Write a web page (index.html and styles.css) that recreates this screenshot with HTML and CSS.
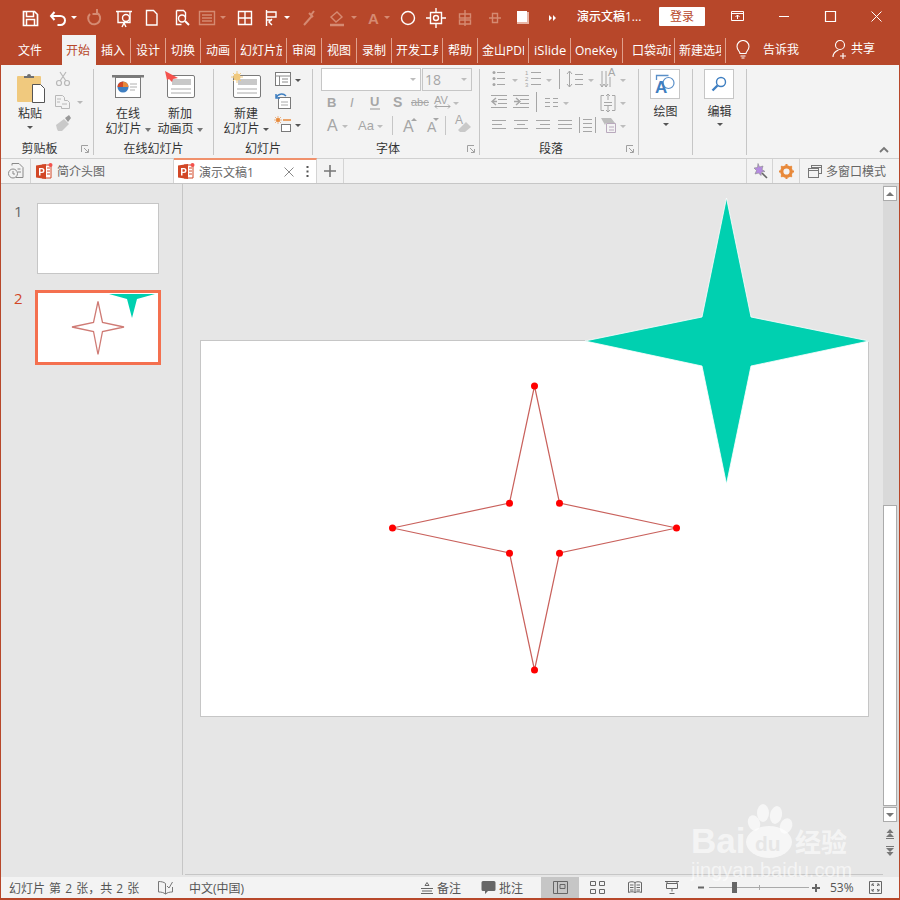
FILE: index.html
```html
<!DOCTYPE html>
<html lang="zh-CN">
<head>
    <meta charset="UTF-8">
    <meta name="viewport" content="width=device-width, initial-scale=1.0">
    <title>演示文稿1 - PowerPoint</title>
    <link rel="stylesheet" href="styles.css">
</head>
<body>
<div class="app">

    <!-- title bar -->
    <div class="titlebar">
        <svg class="qat" width="552" height="33" viewBox="18 0 552 33">
            <g fill="none" stroke="#fff" stroke-width="1.4">
                <path d="M23.500 11.500h11l3 3v11h-14z" stroke-width="1.700"/>
                <path d="M26.500 12v4.500h7V12M26.500 25v-5.500h8V25" stroke-width="1.500"/>
                <path d="M54.500 12l-3.500 4 3.500 4M51.500 16h9a4.500 4.500 0 0 1 0 9h-3" stroke-width="2"/>
                <path d="M116 11.500h16M118 11.500v11h12v-11M124 23l-2 4M124 23l2 4"/>
                <circle cx="126" cy="18" r="3.500"/>
                <path d="M146.500 10.500h7l3.500 3.500v11h-10.500z"/>
                <path d="M176.500 10.500h7l2 2v5M176.500 10.500v14h5"/>
                <circle cx="182" cy="18.500" r="3.500"/>
                <path d="M185 21l4 4" stroke-width="2"/>
                <path d="M238.500 11.500h13v13h-13zM245 11.500v13M238.500 18h13"/>
                <path d="M266.500 10v16M267 12h9v5h-9M267 20h5M272 19l-3 3 3 3"/>
                <circle cx="408" cy="18" r="6.500"/>
                <path d="M430.500 12.500h11v11h-11zM436 8v4M436 24v4M426 18h4M442 18h4"/>
                <circle cx="436" cy="18" r="2.500"/>
            </g>
            <g fill="none" stroke="#d58a72" stroke-width="1.4">
                <path d="M90 14a6 6 0 1 0 7-1M97 9v5h-4.500" stroke-width="2"/>
                <path d="M199.500 11.500h15v13h-15zM202 15h10M202 18h10M202 21h10"/>
                <path d="M304 25l8-9M309 13l4 4M311 15l3-4" stroke-width="2"/>
                <path d="M331 17l6-5 5 5-6 5z"/>
                <path d="M330 25h14" stroke-width="2.500"/>
                <path d="M465 10v16M459.500 14h11v4h-11zM459.500 20h11v4h-11z"/>
                <path d="M489 18h12M492.500 13.500h5v9h-5z"/>
            </g>
            <text x="368" y="24" class="qat-a">A</text>
            <path d="M71 16h6l-3 3zM284 16h6l-3 3z" fill="#fff"/>
            <path d="M220 16h6l-3 3zM351 16h6l-3 3zM384 16h6l-3 3z" fill="#d58a72"/>
            <rect x="517" y="12" width="12" height="12" fill="#e8b5a5"/>
            <rect x="517" y="11" width="10" height="11" fill="#fff"/>
            <path d="M549 15l3 3-3 3zM553 15l3 3-3 3z" fill="#fff"/>
        </svg>
        <span class="doc-title">演示文稿1...</span>
        <button class="login">登录</button>
        <svg width="195" height="33" viewBox="705 0 195 33" class="win-btns">
            <g fill="none" stroke="#fff" stroke-width="1">
                <path d="M731.500 11.500h12v9h-12zM731.500 13.500h12M737.500 19v-4M735.500 17l2-2 2 2"/>
                <path d="M779 16.500h10"/>
                <path d="M825.500 11.500h10v10h-10z" stroke-width="1.200"/>
                <path d="M871.500 11.500l10 10M881.500 11.500l-10 10"/>
            </g>
        </svg>
    </div>

    <!-- ribbon tabs -->
    <div class="tabs">
        <a class="tab tab-file">文件</a>
        <a class="tab tab-active">开始</a>
        <a class="tab">插入</a>
        <a class="tab">设计</a>
        <a class="tab">切换</a>
        <a class="tab">动画</a>
        <a class="tab tab-w51"><span>幻灯片放映</span></a>
        <a class="tab">审阅</a>
        <a class="tab">视图</a>
        <a class="tab">录制</a>
        <a class="tab tab-w51"><span>开发工具</span></a>
        <a class="tab">帮助</a>
        <a class="tab tab-w51"><span>金山PDF</span></a>
        <a class="tab tab-w42">iSlide</a>
        <a class="tab tab-w52"><span>OneKey</span></a>
        <a class="tab tab-w52 tab-pocket"><span>口袋动画</span></a>
        <a class="tab tab-w51"><span>新建选项卡</span></a>
        <svg class="bulb" width="16" height="20" viewBox="0 0 16 20" fill="none" stroke="#fff" stroke-width="1.100">
            <path d="M5 13.500c0-2-3-3.500-3-7a6 6 0 0 1 12 0c0 3.500-3 5-3 7zM5.500 16h5M6.500 18h3"/>
        </svg>
        <span class="tell">告诉我</span>
        <svg class="user" width="18" height="20" viewBox="0 0 18 20" fill="none" stroke="#fff" stroke-width="1.100">
            <circle cx="8" cy="6" r="4.500"/>
            <path d="M1 18c0-4 3-6 5.500-7M11 14v6M8 17h6" />
        </svg>
        <span class="share">共享</span>
    </div>

    <!-- ribbon -->
    <div class="ribbon">
        <div class="group g-clip">
            <div class="group-body">
                <div class="paste">
                    <svg width="30" height="32" viewBox="17 72 30 32">
                        <rect x="18" y="76" width="24" height="26" rx="1" fill="#f0c97e"/>
                        <path d="M25 78v-2h3a2 2 0 0 1 4 0h3v2z" fill="#707070"/>
                        <path d="M33.500 84.500h8l4 4v14h-12z" fill="#fff" stroke="#555"/>
                    </svg>
                    <span class="btn-label paste-label">粘贴</span>
                    <span class="caret"></span>
                </div>
                <svg class="clip-tools" width="30" height="66" viewBox="52 70 30 66" fill="none" stroke="#b8b8b8">
                    <circle cx="58" cy="83" r="2.500" stroke-width="1.200"/>
                    <circle cx="66" cy="83" r="2.500" stroke-width="1.200"/>
                    <path d="M59 81l6-9M65 81l-6-9" stroke-width="1.200"/>
                    <path d="M54.500 95.500h7l2 2v3h3l2 2v6h-8v-2h-6z"/>
                    <path d="M56 99h4M56 102h3M61 104h5" />
                    <path d="M76 101h6l-3 3z" fill="#b8b8b8" stroke="none"/>
                    <path d="M55 125l8-6 5 5-7 7h-4l-1-2z" fill="#c9c9c9" stroke="none"/>
                    <path d="M64 118l4-3 2 3-3 4z" fill="#999" stroke="none"/>
                </svg>
            </div>
            <div class="group-label label-clip">剪贴板</div>
            <svg class="launcher" width="8" height="8" viewBox="0 0 8 8" fill="none" stroke="#a0a0a0"><path d="M.5 7V.5H7M3 3l4 4M4 7.500h3.500V4"/></svg>
        </div>

        <div class="group g-online">
            <div class="group-body big-row">
                <div class="big-btn bb-online">
                    <svg width="34" height="28" viewBox="111 72 34 28">
                        <rect x="112" y="75" width="32" height="2.500" fill="#7a7a7a"/>
                        <rect x="115.500" y="77.500" width="25" height="20" fill="#fff" stroke="#7a7a7a"/>
                        <circle cx="123" cy="87" r="5.500" fill="#3f7fc1"/>
                        <path d="M123 87v-5.500a5.500 5.500 0 0 1 5.500 5.500z" fill="#e8893a"/>
                        <path d="M123 87h-5.500a5.500 5.500 0 0 1 5.500-5.500z" fill="#d24726"/>
                        <path d="M130 84h7M130 87h7M130 90h5" stroke="#b0b0b0"/>
                    </svg>
                    <span class="btn-label">在线</span>
                    <span class="btn-label">幻灯片 <i class="caret caret-o"></i></span>
                </div>
                <div class="big-btn bb-anim">
                    <svg width="32" height="28" viewBox="164 71 32 28">
                        <rect x="167.500" y="75.500" width="27" height="22" rx="1.500" fill="#fff" stroke="#7a7a7a"/>
                        <rect x="172" y="79" width="19" height="6" fill="#c8c8c8"/>
                        <path d="M171 89h20M171 93h20" stroke="#aaa"/>
                        <path d="M165 71l13 7-5 1-1 3-3-3-2 1z" fill="#f4524d"/>
                    </svg>
                    <span class="btn-label">新加</span>
                    <span class="btn-label">动画页 <i class="caret caret-o"></i></span>
                </div>
            </div>
            <div class="group-label">在线幻灯片</div>
        </div>

        <div class="group g-slides">
            <div class="group-body big-row">
                <div class="big-btn bb-new">
                    <svg width="32" height="28" viewBox="230 71 32 28">
                        <rect x="233.500" y="75.500" width="27" height="22" rx="1.500" fill="#fff" stroke="#7a7a7a"/>
                        <rect x="238" y="79" width="19" height="6" fill="#c8c8c8"/>
                        <path d="M237 89h20M237 93h20" stroke="#aaa"/>
                        <circle cx="237" cy="77" r="3.500" fill="#f0c97e"/>
                        <path d="M237 71v12M231 77h12M233 73l8 8M241 73l-8 8" stroke="#f0c97e"/>
                    </svg>
                    <span class="btn-label">新建</span>
                    <span class="btn-label">幻灯片 <i class="caret"></i></span>
                </div>
                <svg class="slide-tools" width="30" height="66" viewBox="274 70 30 66" fill="none">
                    <rect x="275.500" y="72.500" width="15" height="13" fill="#fff" stroke="#7a7a7a"/>
                    <path d="M275 76h16M279.500 76v9M282 79h6M282 82h6" stroke="#8a8a8a"/>
                    <path d="M295 79h6l-3 3z" fill="#555"/>
                    <rect x="278.500" y="97.500" width="12" height="11" fill="#fff" stroke="#7a7a7a"/>
                    <path d="M281 102h7M281 105h7" stroke="#aaa"/>
                    <path d="M276 98a6 6 0 0 1 10-2M276 94v4h4" stroke="#3f7fc1" stroke-width="1.500"/>
                    <circle cx="278" cy="120" r="2" fill="#e8893a"/>
                    <path d="M278 116v8M274 120h8M275 117l6 6M281 117l-6 6" stroke="#e8893a" stroke-width=".6"/>
                    <path d="M283 120h8" stroke="#e8893a" stroke-width="1.500"/>
                    <rect x="281.500" y="124.500" width="9" height="7" fill="#fff" stroke="#7a7a7a"/>
                    <path d="M295 124h6l-3 3z" fill="#555"/>
                </svg>
            </div>
            <div class="group-label">幻灯片</div>
        </div>

        <div class="group g-font">
            <div class="group-body font-body">
                <div class="combo-row">
                    <div class="combo combo-name"><span></span><i class="caret caret-g"></i></div>
                    <div class="combo combo-size"><span>18</span><i class="caret caret-g"></i></div>
                </div>
                <svg width="167" height="46" viewBox="313 93 167 46" class="font-tools">
                    <text x="327" y="107" class="t-b">B</text>
                    <text x="350" y="107" class="t-i">I</text>
                    <text x="370" y="106" class="t-u">U</text>
                    <path d="M370 109h10" stroke="#a6a6a6" stroke-width="1.200"/>
                    <text x="393" y="107" class="t-s">S</text>
                    <text x="411" y="106" class="t-abc">abc</text>
                    <path d="M411 102.500h18" stroke="#a6a6a6"/>
                    <text x="434" y="104" class="t-av">AV</text>
                    <path d="M435 106.500h15M437 104.500l-2 2 2 2M448 104.500l2 2-2 2" fill="none" stroke="#a6a6a6"/>
                    <path d="M453 102h6l-3 3z" fill="#bdbdbd"/>
                    <text x="327" y="131" class="t-big">A</text>
                    <path d="M342 125h6l-3 3zM377 125h6l-3 3z" fill="#bdbdbd"/>
                    <text x="358" y="130" class="t-aa">Aa</text>
                    <path d="M392.500 116v19M445.500 116v19" stroke="#c6c6c6"/>
                    <text x="403" y="132" class="t-big">A</text>
                    <path d="M411 121l3-3 3 3z" fill="#a6a6a6"/>
                    <text x="427" y="132" class="t-mid">A</text>
                    <path d="M433 118h6l-3 3z" fill="#a6a6a6"/>
                    <text x="455" y="124" class="t-small">A</text>
                    <path d="M458 130l8-8 5 5-6 5h-5z" fill="#c9c9c9"/>
                </svg>
            </div>
            <div class="group-label label-left">字体</div>
            <svg class="launcher" width="8" height="8" viewBox="0 0 8 8" fill="none" stroke="#a0a0a0"><path d="M.5 7V.5H7M3 3l4 4M4 7.500h3.500V4"/></svg>
        </div>

        <div class="group g-para">
            <div class="group-body">
                <svg width="159" height="70" viewBox="480 68 159 70" class="para-tools" fill="none" stroke="#a6a6a6">
                    <path d="M497 72.500h8M497 78.500h8M497 84.500h8M531 72.500h10M531 78.500h10M531 84.500h10"/>
                    <circle cx="494" cy="72.500" r="1.500" fill="#a6a6a6" stroke="none"/>
                    <circle cx="494" cy="78.500" r="1.500" fill="#a6a6a6" stroke="none"/>
                    <circle cx="494" cy="84.500" r="1.500" fill="#a6a6a6" stroke="none"/>
                    <text x="525" y="75" class="t-num">1</text>
                    <text x="525" y="81" class="t-num">2</text>
                    <text x="525" y="87" class="t-num">3</text>
                    <path d="M559.500 69v20M569.500 71v16M567 74l2.500-3 2.500 3M567 84l2.500 3 2.500-3M575 74.500h8M575 79.500h8M575 84.500h8"/>
                    <path d="M602 71v16M606 71v16M610 77v10M600 84l2 3 2-3M604 84l2 3 2-3" />
                    <text x="608" y="76" class="t-av">A</text>
                    <path d="M512 79h6l-3 3zM546 79h6l-3 3zM588 79h6l-3 3zM620 79h6l-3 3zM563 102h6l-3 3zM620 102h6l-3 3zM620 125h6l-3 3z" fill="#bdbdbd" stroke="none"/>
                    <path d="M491 95.500h16M498 99.500h9M498 103.500h9M491 107.500h16M513 95.500h16M520 99.500h9M520 103.500h9M513 107.500h16"/>
                    <path d="M496 98l-4 3.500 4 3.500M492 101.500h5M514 101.500h5M516 98l4 3.500-4 3.500" stroke-width="1.400"/>
                    <path d="M536.500 92v20"/>
                    <path d="M545 98.500h5M553 98.500h5M545 102.500h5M553 102.500h5M545 106.500h5M553 106.500h5"/>
                    <path d="M604 95.500h-3v15h3M612 95.500h3v15h-3M608 94v6M606 96l2-2 2 2M608 106v6M606 110l2 2 2-2M604 102.500h8M604 105.500h8" />
                    <path d="M492 120.500h14M492 124.500h10M492 128.500h14M514 120.500h14M517 124.500h8M514 128.500h14M536 120.500h14M540 124.500h10M536 128.500h14M558 120.500h14M558 124.500h14M558 128.500h14"/>
                    <path d="M579.500 117v16M595.500 117v16M583 119.500h9M583 123.500h9M583 127.500h9M583 131.500h9"/>
                    <path d="M601 118h10l4 5h-9l-1 2z" fill="#bdbdbd" stroke="none"/>
                    <path d="M606.500 123.500h9v9h-9zM609 127h5M609 130h5" stroke="#b9a9bd"/>
                </svg>
            </div>
            <div class="group-label label-left">段落</div>
            <svg class="launcher" width="8" height="8" viewBox="0 0 8 8" fill="none" stroke="#a0a0a0"><path d="M.5 7V.5H7M3 3l4 4M4 7.500h3.500V4"/></svg>
        </div>

        <div class="group g-tool">
            <div class="group-body tool-body">
                <div class="tool-box">
                    <svg width="20" height="20" viewBox="0 0 20 20" fill="none">
                        <path d="M1.500 6V1.500h12" stroke="#5a8fc8" stroke-width="1.300"/>
                        <circle cx="13.500" cy="9" r="5.500" stroke="#5a8fc8" stroke-width="1.200"/>
                        <text x="0" y="19" class="t-draw">A</text>
                    </svg>
                </div>
                <span class="btn-label">绘图</span>
                <span class="caret"></span>
            </div>
        </div>

        <div class="group g-tool">
            <div class="group-body tool-body">
                <div class="tool-box">
                    <svg width="16" height="16" viewBox="0 0 16 16" fill="none" stroke="#3f7fc1">
                        <circle cx="10" cy="6" r="4.500" stroke-width="1.400"/>
                        <path d="M6.500 9.500L1.500 14.500" stroke-width="2.400"/>
                    </svg>
                </div>
                <span class="btn-label">编辑</span>
                <span class="caret"></span>
            </div>
        </div>

        <svg class="collapse" width="10" height="7" viewBox="0 0 10 7" fill="none" stroke="#777" stroke-width="1.800"><path d="M1 6l4-4 4 4"/></svg>
    </div>

    <!-- document tabs -->
    <div class="docbar">
        <div class="doc-cell doc-history">
            <svg width="16" height="16" viewBox="0 0 16 16" fill="none" stroke="#8a8a8a">
                <path d="M4 2.500V.5h7l4 4v10H8"/>
                <circle cx="5" cy="10.500" r="4.500"/>
                <path d="M5 8v3h2M9.500 6h3M10 9h3"/>
            </svg>
        </div>
        <div class="doc-tab">
            <svg width="17" height="17"><use href="#ppt"/></svg>
            <span class="doc-name">简介头图</span>
        </div>
        <div class="doc-tab doc-tab-active">
            <svg width="17" height="17"><use href="#ppt"/></svg>
            <span class="doc-name">演示文稿1</span>
            <svg class="doc-close" width="10" height="10" viewBox="0 0 10 10" stroke="#888"><path d="M.5.500l9 9M9.500.500l-9 9"/></svg>
            <svg class="doc-more" width="3" height="11" viewBox="0 0 3 11" fill="#555"><rect x=".5" width="2" height="2"/><rect x=".5" y="4.500" width="2" height="2"/><rect x=".5" y="9" width="2" height="2"/></svg>
        </div>
        <div class="doc-cell doc-plus">
            <svg width="12" height="12" viewBox="0 0 12 12" stroke="#777" stroke-width="1.600"><path d="M6 0v12M0 6h12"/></svg>
        </div>
        <div class="doc-spacer"></div>
        <div class="doc-cell doc-magic">
            <svg width="16" height="16" viewBox="0 0 16 16">
                <path d="M6 .5l1.500 3.500 3.500-1-1 3.500 3 2-3.500.500-.5 3.500-2.500-2.500-3.500 1 1.500-3.500-2.500-2.500 3.500-.5z" fill="#b58be0" stroke="#8a8a8a" stroke-width=".6"/>
                <path d="M10 10l5 5" stroke="#666" stroke-width="1.600"/>
            </svg>
        </div>
        <div class="doc-cell doc-gear">
            <svg width="15" height="15" viewBox="0 0 15 15">
                <circle cx="7.500" cy="7.500" r="4.700" fill="none" stroke="#e8893a" stroke-width="3.200"/>
                <path d="M7.500 0v3M7.500 12v3M0 7.500h3M12 7.500h3M2.200 2.200l2 2M10.800 10.800l2 2M12.800 2.200l-2 2M4.200 10.800l-2 2" stroke="#e8893a" stroke-width="2"/>
            </svg>
        </div>
        <div class="doc-multi">
            <svg width="14" height="13" viewBox="0 0 14 13" fill="#f3f3f3" stroke="#777"><rect x="3.500" y=".5" width="10" height="8"/><path d="M3.500 2.500h10" /><rect x=".5" y="3.500" width="10" height="9"/><path d="M.5 5.500h10"/></svg>
            <span>多窗口模式</span>
        </div>
    </div>

    <!-- main area -->
    <div class="main">
        <div class="thumbs">
            <div class="thumb-row">
                <span class="thumb-num">1</span>
                <div class="thumb"></div>
            </div>
            <div class="thumb-row thumb-row-on">
                <span class="thumb-num">2</span>
                <div class="thumb thumb-on">
                    <svg width="120" height="69" viewBox="38 293 120 69">
                        <path d="M98 301.500l4.500 21 21.500 4.500-21.500 4.500-4.500 23-4.500-23-21.500-4.500 21.500-4.500z" fill="#fff" stroke="#cf7b75" stroke-width="1.300"/>
                        <path d="M109 294h46l-18 5-5 19-5-19z" fill="#00d0b0"/>
                    </svg>
                </div>
            </div>
        </div>
        <div class="stage">
            <div class="slide"></div>
            <svg class="shapes" width="698" height="690" viewBox="185 184 698 690">
                <path d="M534.500 386l25 117 117 25-117 25-25 117-25-117-117-25 117-25z" fill="none" stroke="#c9615c" stroke-width="1.200"/>
                <g fill="#f00">
                    <circle cx="534.500" cy="386" r="3.500"/>
                    <circle cx="559.500" cy="503.300" r="3.500"/>
                    <circle cx="676.500" cy="528" r="3.500"/>
                    <circle cx="559.500" cy="553.300" r="3.500"/>
                    <circle cx="534.500" cy="670" r="3.500"/>
                    <circle cx="509.500" cy="553.300" r="3.500"/>
                    <circle cx="392.500" cy="528" r="3.500"/>
                    <circle cx="509.500" cy="503.300" r="3.500"/>
                </g>
                <path d="M726.500 198L751 317l118 24-118 25-24.500 118L702 366l-117-25 117-24z" fill="#00d0b0" stroke="#fff" stroke-width=".8"/>
            </svg>
        </div>
        <div class="scroll">
            <div class="scroll-track">
                <div class="scroll-btn"><i class="arrow-up"></i></div>
                <div class="scroll-gap"></div>
                <div class="scroll-thumb"></div>
                <div class="scroll-btn"><i class="arrow-down"></i></div>
            </div>
            <svg class="page-arrows" width="14" height="30" viewBox="0 0 14 30" fill="#777">
                <path d="M3.500 5l3.500-4 3.500 4zM3 9l4-4 4 4zM3 20l4 4 4-4zM3.500 24l3.500 4 3.500-4zM3 10h8v1H3zM3 18h8v1H3z"/>
            </svg>
        </div>
    </div>

    <!-- status bar -->
    <div class="status">
        <span class="st-count">幻灯片 第 2 张，共 2 张</span>
        <svg class="st-spell" width="15" height="14" viewBox="0 0 15 14" fill="none" stroke="#777"><path d="M7.500 2.500C6 1 3 .5.500.5v10.500c3 0 5 .5 7 2 2-1.500 4-2 7-2v-5M7.500 2.500v10.500M9 5l2 2 3.500-6"/></svg>
        <span class="st-lang">中文(中国)</span>
        <span class="st-fill"></span>
        <svg class="st-notes" width="12" height="12" viewBox="0 0 12 12" fill="none" stroke="#666"><path d="M0 6.500h12M1 9h10M0 11.500h12M4 3.500l2-3 2 3z"/></svg>
        <span class="st-text">备注</span>
        <svg class="st-comment" width="15" height="15" viewBox="0 0 15 15" fill="#666"><path d="M2 1h11a1.500 1.500 0 0 1 1.500 1.500v7a1.500 1.500 0 0 1-1.500 1.500H7l-3 3v-3H2A1.500 1.500 0 0 1 .5 9.500v-7A1.500 1.500 0 0 1 2 1z"/></svg>
        <span class="st-text st-text-c">批注</span>
        <div class="view-btn view-on">
            <svg width="15" height="13" viewBox="0 0 15 13" fill="none" stroke="#666"><path d="M.5.500h14v12H.5zM4.500.5v12M7 3.500h5v4H7z"/></svg>
        </div>
        <div class="view-btn">
            <svg width="15" height="13" viewBox="0 0 15 13" fill="none" stroke="#666"><path d="M.5.500h5v4h-5zM9.500.5h5v4h-5zM.5 8.500h5v4h-5zM9.500 8.500h5v4h-5z"/></svg>
        </div>
        <div class="view-btn">
            <svg width="14" height="13" viewBox="0 0 14 13" fill="none" stroke="#666"><path d="M.5 1.500c2-1 5-1 6.500 0 1.500-1 4.500-1 6.500 0v10c-2-1-5-1-6.500 0-1.500-1-4.500-1-6.500 0zM7 1.500v10M2 4h3.500M2 6.500h3.500M2 9h3.500M8.500 4H12M8.500 6.500H12M8.500 9H12"/></svg>
        </div>
        <div class="view-btn">
            <svg width="14" height="13" viewBox="0 0 14 13" fill="none" stroke="#666"><path d="M0 .5h14M2 .5v1.500M12 .5v1.500M1.500 2.500h11v5h-11zM7 7.500v3M4.500 12.500h5"/></svg>
        </div>
        <div class="zoom-ctl">
            <svg width="7" height="7" viewBox="0 0 7 7"><rect y="2.500" width="6" height="2" fill="#666"/></svg>
            <div class="zoom-track"><i class="zoom-tick"></i><i class="zoom-thumb"></i></div>
            <svg width="8" height="8" viewBox="0 0 8 8"><path d="M0 3h8v2H0zM3 0h2v8H3z" fill="#666"/></svg>
        </div>
        <span class="st-pct">53%</span>
        <svg class="st-fit" width="13" height="13" viewBox="0 0 13 13" fill="none" stroke="#666"><path d="M.5.500h12v12H.5zM3 3l2 2M3 3v2M3 3h2M10 3l-2 2M10 3v2M10 3H8M3 10l2-2M3 10V8M3 10h2M10 10L8 8M10 10V8M10 10H8"/></svg>
    </div>

    <!-- watermark -->
    <div class="watermark">
        <svg width="170" height="85" viewBox="688 800 170 85">
            <g fill="#fff" fill-opacity=".62">
                <ellipse cx="754" cy="823" rx="6" ry="8" transform="rotate(-20 754 823)"/>
                <ellipse cx="763" cy="813" rx="6" ry="9"/>
                <ellipse cx="776" cy="815" rx="6" ry="9" transform="rotate(12 776 815)"/>
                <ellipse cx="786" cy="826" rx="6" ry="8" transform="rotate(25 786 826)"/>
                <ellipse cx="769" cy="842" rx="23" ry="16"/>
                <text x="691" y="853" class="wm-bai">Bai</text>
                <text x="795" y="852" class="wm-jy">经验</text>
                <text x="691" y="877" class="wm-url">jingyan.baidu.com</text>
            </g>
            <text x="755" y="851" class="wm-du">du</text>
        </svg>
    </div>

    <svg class="defs" width="0" height="0">
        <symbol id="ppt" viewBox="0 0 17 17">
            <path d="M6 2h9v13H6z" fill="#fff" stroke="#d24726"/>
            <path d="M0 2.500l10-1.500v15L0 14.500z" fill="#d24726"/>
            <path d="M3 5h3a2 2 0 0 1 0 5H4.500v2.500H3zM4.500 6.300v2.400h1.300a1.200 1.200 0 0 0 0-2.400z" fill="#fff" fill-rule="evenodd"/>
            <path d="M11 5h3M11 8h3M11 11h3" stroke="#d24726"/>
            <circle cx="14.500" cy="2" r="2" fill="#f4524d"/>
        </symbol>
    </svg>
</div>
</body>
</html>
```

FILE: styles.css
```css
* {
    box-sizing: border-box;
}
html, body {
    margin: 0;
    padding: 0;
}
body {
    font-family: "Open Sans", "Noto Sans CJK SC", sans-serif;
    font-size: 12px;
    color: #444;
}
svg {
    display: block;
    flex: none;
}
.app {
    position: relative;
    width: 900px;
    height: 900px;
    overflow: hidden;
    display: flex;
    flex-direction: column;
    background-color: #e6e6e6;
    border-left: 1px solid #b7472a;
    border-right: 1px solid #b7472a;
    border-bottom: 2px solid #b7472a;
}

/* title bar */
.titlebar {
    height: 33px;
    margin-left: -1px;
    margin-right: -1px;
    padding-left: 18px;
    display: flex;
    background-color: #b7472a;
    color: #fff;
}
.doc-title {
    margin-left: 7px;
    line-height: 33px;
    width: 75px;
    white-space: nowrap;
    font-weight: 500;
}
.login {
    width: 46px;
    height: 19px;
    margin: 7px 0 0 7px;
    padding: 0;
    border: none;
    border-radius: 1px;
    background-color: #fff;
    color: #b7472a;
    font: inherit;
    line-height: 19px;
}
.qat-a {
    font: bold 15px "Liberation Sans", sans-serif;
    fill: #d58a72;
}

/* ribbon tabs */
.tabs {
    height: 32px;
    display: flex;
    background-color: #b7472a;
    color: #fff;
    white-space: nowrap;
}
.tab {
    width: 35px;
    height: 25px;
    margin-top: 5px;
    padding-left: 5px;
    line-height: 25px;
    overflow: hidden;
    border-right: 1px solid #e0a08c;
}
.tab span {
    display: block;
    width: 42px;
    overflow: hidden;
}
.tab-file {
    width: 61px;
    padding-left: 17px;
    border-right: none;
}
.tab-active {
    width: 34px;
    height: 30px;
    margin-top: 2px;
    padding-left: 4px;
    line-height: 31px;
    border-right: none;
    background-color: #f3f3f3;
    color: #b7472a;
}
.tab-w42 {
    width: 42px;
    padding-left: 5px;
    font-size: 13px;
}
.tab-w51 { width: 51px; padding-left: 4px; }
.tab-w52 { width: 52px; padding-left: 4px; }
.tab-pocket { padding-left: 9px; }
.tab-pocket span { width: 39px; }
.bulb {
    margin: 7px 0 0 9px;
}
.tell {
    margin-left: 12px;
    line-height: 33px;
}
.user {
    margin: 6px 0 0 33px;
}
.share {
    margin-left: 1px;
    line-height: 31px;
}

/* ribbon */
.ribbon {
    position: relative;
    height: 93px;
    padding-top: 4px;
    display: flex;
    background-color: #f3f3f3;
    color: #333;
}
.group {
    position: relative;
    height: 86px;
    display: flex;
    flex-direction: column;
    border-right: 1px solid #c6c6c6;
}
.group-body {
    flex: 1;
    min-height: 0;
    display: flex;
}
.group-label {
    height: 19px;
    margin-bottom: -3px;
    line-height: 19px;
    text-align: center;
}
.label-clip {
    padding-right: 15px;
}
.label-left {
    padding-right: 16px;
}
.launcher {
    position: absolute;
    right: 4px;
    bottom: 2px;
}
.g-clip { width: 93px; }
.g-online { width: 120px; }
.g-slides { width: 99px; }
.g-font { width: 167px; }
.g-para { width: 159px; }
.g-tool { width: 54px; }

.caret {
    display: block;
    width: 0;
    height: 0;
    border-left: 3.500px solid transparent;
    border-right: 3.500px solid transparent;
    border-top: 3.500px solid #555;
}
.btn-label {
    display: flex;
    align-items: center;
    justify-content: center;
    gap: 3px;
    height: 15px;
    line-height: 15px;
    white-space: nowrap;
}
.btn-label .caret {
    margin-top: 2px;
}
.caret-o {
    border-top-color: transparent;
    border-left-width: 3px;
    border-right-width: 3px;
    position: relative;
}
.caret-o::after {
    content: "";
    position: absolute;
    left: -3px;
    top: -3.500px;
    width: 0;
    height: 0;
    border-left: 3px solid transparent;
    border-right: 3px solid transparent;
    border-top: 4px solid #777;
}
.caret-g {
    border-top-color: #bdbdbd;
}
.paste {
    width: 36px;
    margin-left: 11px;
    display: flex;
    flex-direction: column;
    align-items: center;
}
.paste svg {
    margin: 3px 0 0 2px;
}
.paste-label {
    margin-top: 2px;
}
.paste .caret {
    margin-top: 5px;
}
.clip-tools {
    margin: 1px 0 0 5px;
}
.big-row {
    padding-top: 3px;
}
.big-btn {
    display: flex;
    flex-direction: column;
    align-items: center;
}
.big-btn .btn-label:nth-of-type(1) {
    margin-top: 6px;
}
.bb-online { width: 52px; margin-left: 8px; }
.bb-anim { width: 52px; }
.bb-new { width: 58px; margin-left: 3px; }
.bb-online svg { margin-top: 0; }
.bb-anim svg { margin-top: -1px; margin-bottom: 1px; }
.bb-new svg { margin-top: -1px; margin-bottom: 1px; }
.slide-tools {
    margin: -2px 0 0 -1px;
}

/* font group */
.font-body {
    flex-direction: column;
}
.combo-row {
    display: flex;
    height: 24px;
    margin: -1px 0 0 8px;
    gap: 1px;
}
.combo {
    height: 23px;
    padding: 0 4px 0 2px;
    display: flex;
    align-items: center;
    justify-content: space-between;
    background-color: #fff;
    border: 1px solid #c6c6c6;
    font-size: 14px;
    color: #a6a6a6;
}
.combo-name { width: 100px; }
.combo-size {
    width: 50px;
    background-color: #f3f3f3;
}
.font-tools {
    margin-top: 2px;
}
.font-tools text, .para-tools text {
    font-family: "Liberation Sans", sans-serif;
    fill: #a6a6a6;
    stroke: none;
}
.t-b { font-size: 13px; font-weight: bold; }
.t-i { font-size: 13px; font-style: italic; font-family: "Liberation Serif", serif; }
.t-u { font-size: 13px; font-weight: bold; }
.t-s { font-size: 14px; font-weight: bold; }
.t-abc { font-size: 11px; }
.t-av { font-size: 11px; }
.t-big { font-size: 16px; }
.t-aa { font-size: 13px; }
.t-mid { font-size: 14px; }
.t-small { font-size: 12px; }
.t-num { font-size: 6px; }
.para-tools {
    margin-top: -1px;
}
.t-draw {
    font: bold 17px "Liberation Sans", sans-serif;
    fill: #3f7fc1;
}

/* draw and edit */
.tool-body {
    flex-direction: column;
    align-items: center;
}
.tool-box {
    width: 30px;
    height: 30px;
    margin-right: 2px;
    display: flex;
    align-items: center;
    justify-content: center;
    background-color: #fff;
    border: 1px solid #c6c6c6;
}
.tool-body .btn-label {
    margin-top: 5px;
}
.tool-body .caret {
    margin-top: 4px;
}
.collapse {
    position: absolute;
    right: 10px;
    bottom: 5px;
}

/* document tabs */
.docbar {
    height: 26px;
    display: flex;
    background-color: #f3f3f3;
    border-top: 1px solid #d0d0d0;
    border-bottom: 1px solid #c6c6c6;
    color: #666;
}
.doc-cell {
    display: flex;
    align-items: center;
    justify-content: center;
    border-right: 1px solid #d4d4d4;
}
.doc-history { width: 30px; }
.doc-plus { width: 27px; }
.doc-spacer {
    flex: 1;
}
.doc-magic {
    width: 27px;
    border-left: 1px solid #d4d4d4;
}
.doc-gear { width: 27px; }
.doc-tab {
    width: 143px;
    display: flex;
    align-items: center;
    padding-left: 5px;
    border-right: 1px solid #d4d4d4;
}
.doc-name {
    margin-left: 4px;
    flex: 1;
    white-space: nowrap;
}
.doc-tab-active {
    margin-top: -1px;
    padding-left: 4px;
    padding-right: 7px;
    background-color: #fff;
    border-top: 2px solid #f0916c;
    height: 25px;
}
.doc-close {
    margin-right: 12px;
}
.doc-multi {
    width: 99px;
    padding-left: 8px;
    display: flex;
    align-items: center;
    gap: 4px;
    white-space: nowrap;
}

/* main area */
.main {
    height: 693px;
    display: flex;
}
.thumbs {
    width: 182px;
    height: 691px;
    flex: none;
    border-right: 1px solid #c6c6c6;
}
.thumb-row {
    position: relative;
    margin-top: 19px;
    padding-left: 36px;
}
.thumb-row-on {
    margin-top: 16px;
    padding-left: 34px;
}
.thumb-num {
    position: absolute;
    left: 13px;
    top: -2px;
    font-size: 15px;
    color: #666;
}
.thumb-row-on .thumb-num {
    color: #d24726;
}
.thumb {
    width: 122px;
    height: 71px;
    background-color: #fff;
    border: 1px solid #c6c6c6;
}
.thumb-on {
    width: 126px;
    height: 75px;
    border: 3px solid #f4704f;
}
.stage {
    position: relative;
    flex: 1;
    min-width: 0;
    height: 691px;
    margin-left: 2px;
    padding: 156px 0 0 15px;
    border-bottom: 1px solid #c6c6c6;
}
.slide {
    width: 669px;
    height: 377px;
    background-color: #fff;
    border: 1px solid #c6c6c6;
}
.shapes {
    position: absolute;
    left: 0;
    top: 0;
}
.scroll {
    width: 16px;
    flex: none;
}
.scroll-track {
    height: 638px;
    padding-top: 2px;
    background-color: #d9d9d9;
    display: flex;
    flex-direction: column;
}
.scroll-btn {
    width: 14px;
    height: 15px;
    flex: none;
    display: flex;
    align-items: center;
    justify-content: center;
    background-color: #fff;
    border: 1px solid #ababab;
}
.arrow-up, .arrow-down {
    width: 0;
    height: 0;
    border-left: 4px solid transparent;
    border-right: 4px solid transparent;
}
.arrow-up { border-bottom: 4px solid #777; }
.arrow-down { border-top: 4px solid #777; }
.scroll-gap {
    height: 304px;
    flex: none;
}
.scroll-thumb {
    flex: 1;
    width: 14px;
    background-color: #fff;
    border: 1px solid #ababab;
    margin-bottom: 1px;
}
.page-arrows {
    margin-top: 6px;
}

/* status bar */
.status {
    height: 21px;
    padding: 0 17px 0 8px;
    display: flex;
    align-items: center;
    background-color: #f3f3f3;
    color: #555;
    white-space: nowrap;
}
.st-count {
    width: 149px;
    word-spacing: 1px;
}
.st-lang {
    margin-left: 16px;
}
.st-fill {
    flex: 1;
}
.st-text {
    margin-left: 4px;
}
.st-comment {
    margin-left: 20px;
}
.st-text-c {
    margin-left: 3px;
    margin-right: 18px;
}
.view-btn {
    width: 37px;
    height: 21px;
    display: flex;
    align-items: center;
    justify-content: center;
}
.view-on {
    width: 38px;
    background-color: #c6c6c6;
}
.zoom-ctl {
    margin-left: 8px;
    width: 122px;
    display: flex;
    align-items: center;
}
.zoom-track {
    position: relative;
    width: 100px;
    height: 1px;
    margin: 0 3px 0 4px;
    background-color: #aaa;
}
.zoom-tick {
    position: absolute;
    left: 50px;
    top: -2px;
    width: 1px;
    height: 5px;
    background-color: #aaa;
}
.zoom-thumb {
    position: absolute;
    left: 23px;
    top: -5px;
    width: 5px;
    height: 11px;
    background-color: #666;
}
.st-pct {
    margin-left: 10px;
    width: 39px;
}

/* watermark */
.watermark {
    position: absolute;
    left: 687px;
    top: 800px;
}
.wm-bai {
    font: bold 35px "Liberation Sans", sans-serif;
}
.wm-du {
    font: bold 21px "Liberation Sans", sans-serif;
    fill: #e6e6e6;
}
.wm-jy {
    font: bold 26px "Noto Sans CJK SC", sans-serif;
}
.wm-url {
    font: 20px "Liberation Sans", sans-serif;
}
.defs {
    position: absolute;
}
```
